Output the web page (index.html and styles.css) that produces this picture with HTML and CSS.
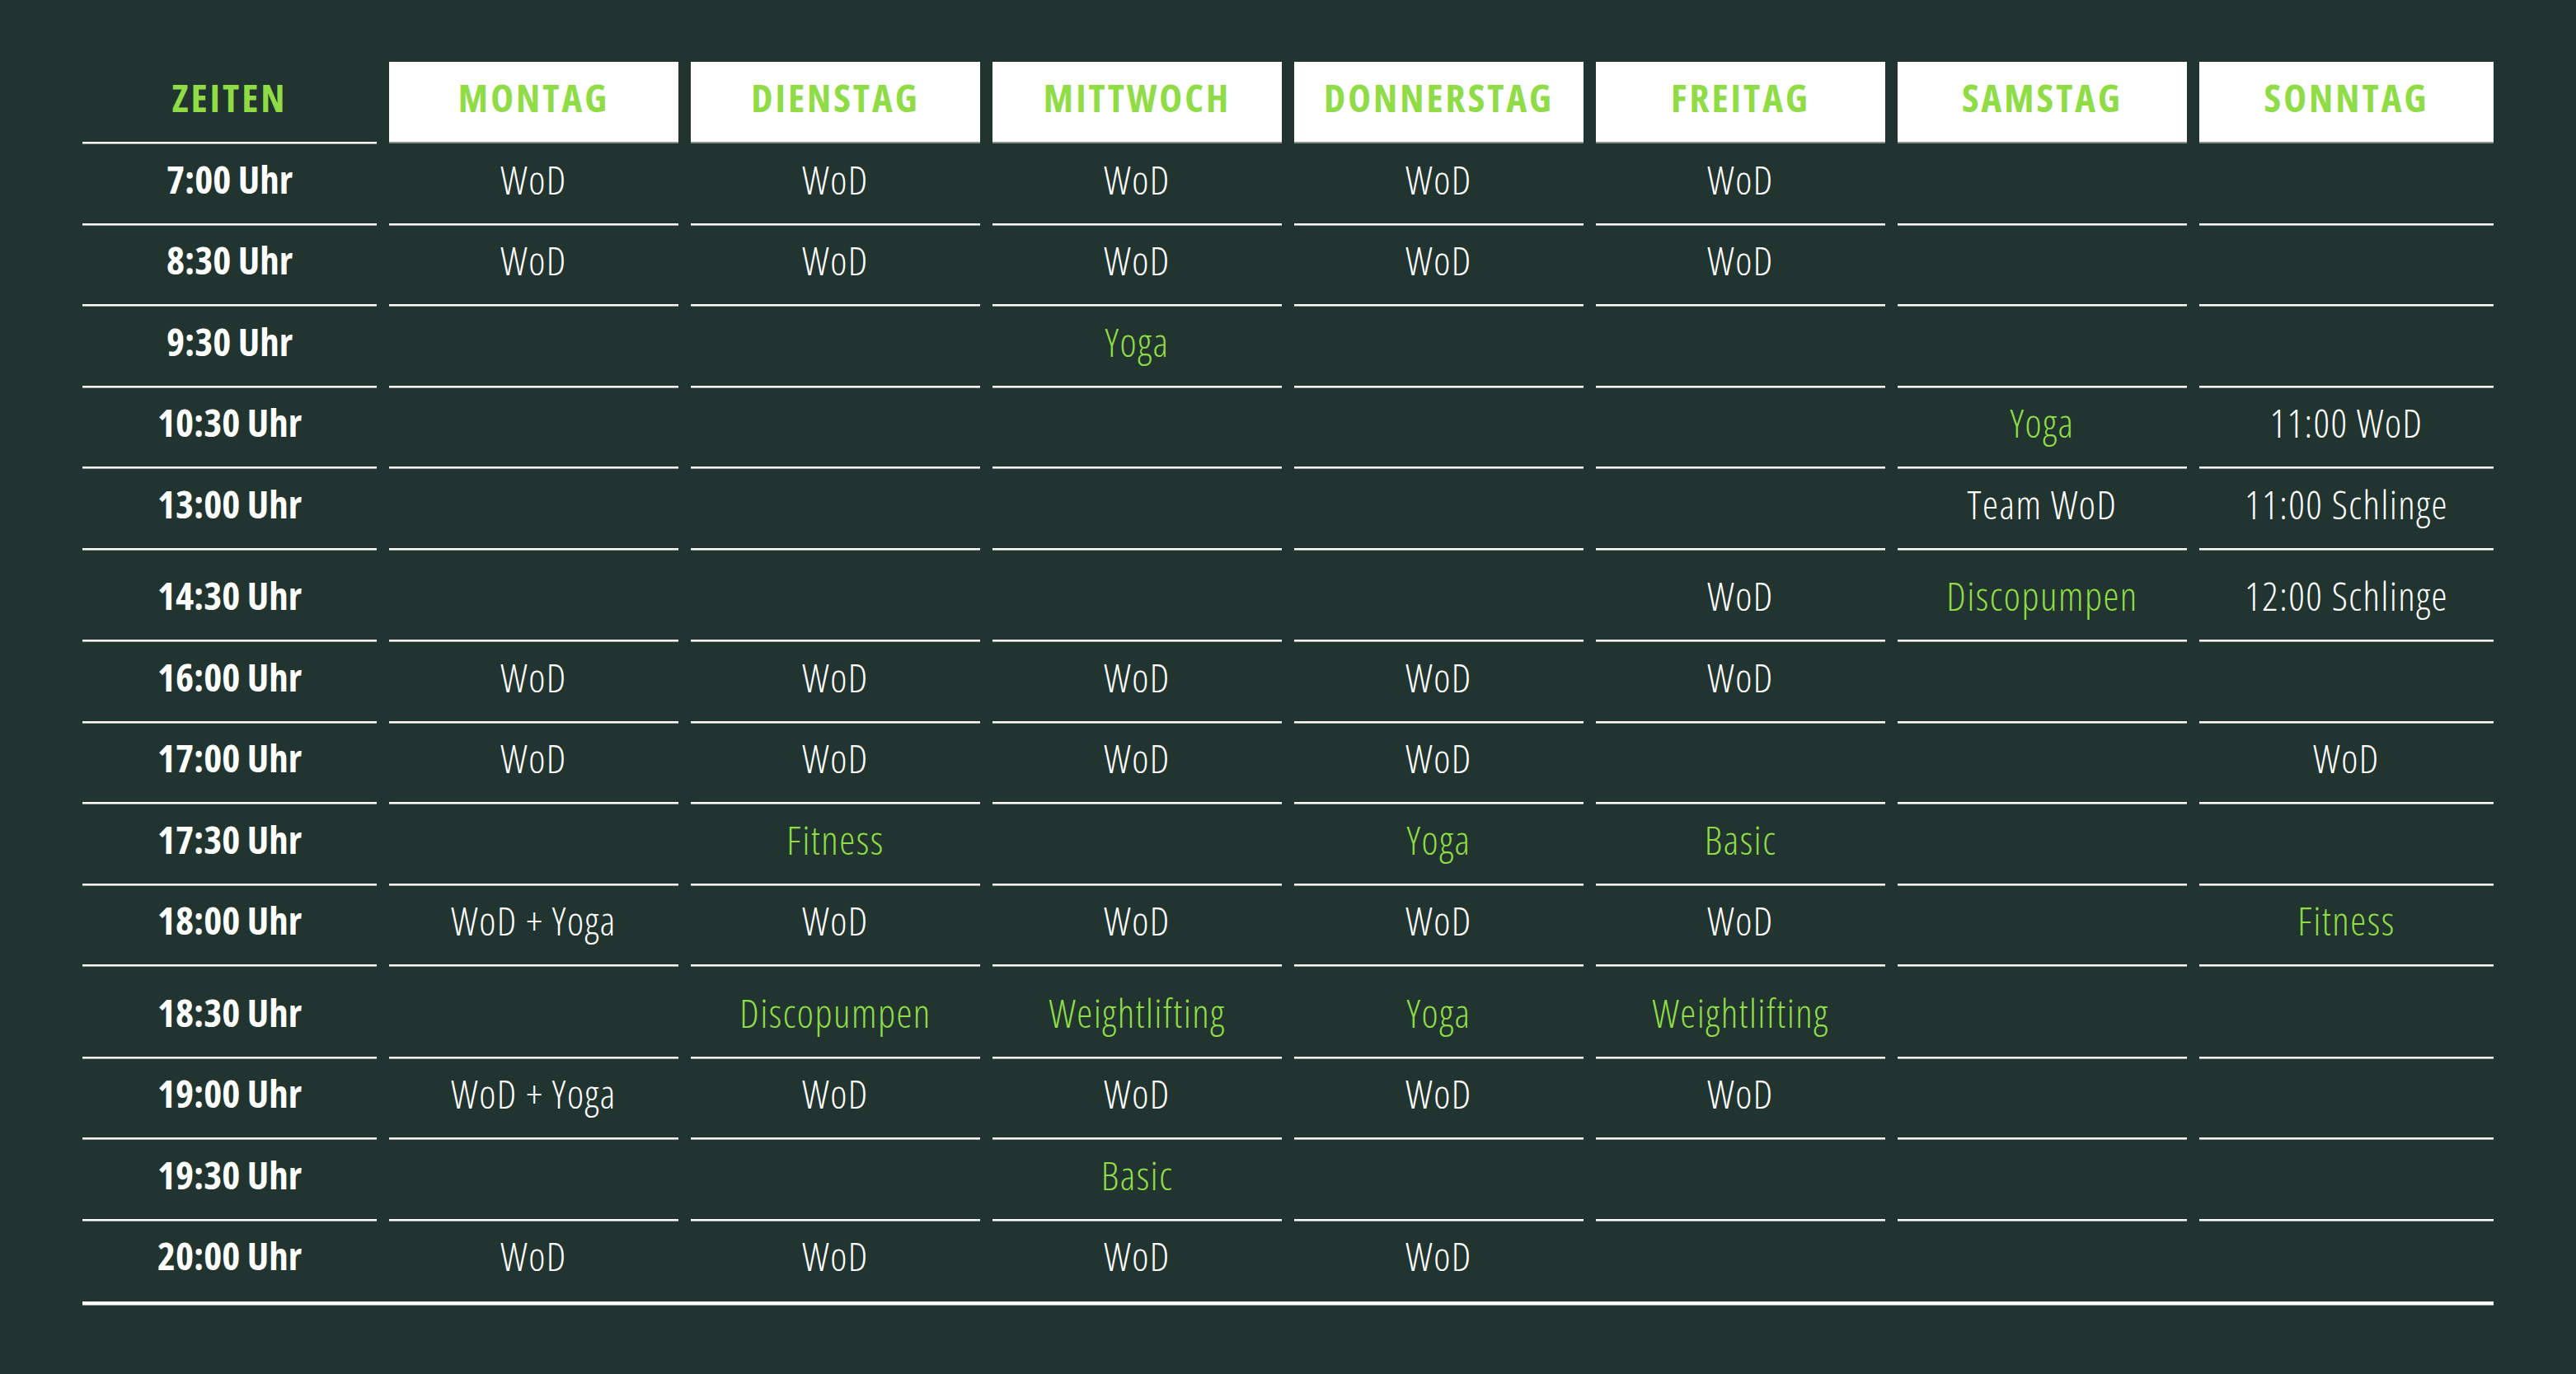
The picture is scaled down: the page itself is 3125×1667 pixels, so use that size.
FILE: index.html
```html
<!DOCTYPE html>
<html lang="de">
<head>
<meta charset="utf-8">
<title>Stundenplan</title>
<link rel="stylesheet" href="styles.css">
</head>
<body>
<div class="schedule">
  <div class="row head">
    <div class="cell time">ZEITEN</div>
    <div class="cell day">MONTAG</div>
    <div class="cell day">DIENSTAG</div>
    <div class="cell day">MITTWOCH</div>
    <div class="cell day">DONNERSTAG</div>
    <div class="cell day">FREITAG</div>
    <div class="cell day">SAMSTAG</div>
    <div class="cell day">SONNTAG</div>
  </div>
  <div class="row">
    <div class="cell time">7:00 Uhr</div>
    <div class="cell">WoD</div><div class="cell">WoD</div><div class="cell">WoD</div><div class="cell">WoD</div><div class="cell">WoD</div><div class="cell"></div><div class="cell"></div>
  </div>
  <div class="row">
    <div class="cell time">8:30 Uhr</div>
    <div class="cell">WoD</div><div class="cell">WoD</div><div class="cell">WoD</div><div class="cell">WoD</div><div class="cell">WoD</div><div class="cell"></div><div class="cell"></div>
  </div>
  <div class="row">
    <div class="cell time">9:30 Uhr</div>
    <div class="cell"></div><div class="cell"></div><div class="cell green">Yoga</div><div class="cell"></div><div class="cell"></div><div class="cell"></div><div class="cell"></div>
  </div>
  <div class="row">
    <div class="cell time">10:30 Uhr</div>
    <div class="cell"></div><div class="cell"></div><div class="cell"></div><div class="cell"></div><div class="cell"></div><div class="cell green">Yoga</div><div class="cell">11:00 WoD</div>
  </div>
  <div class="row">
    <div class="cell time">13:00 Uhr</div>
    <div class="cell"></div><div class="cell"></div><div class="cell"></div><div class="cell"></div><div class="cell"></div><div class="cell">Team WoD</div><div class="cell">11:00 Schlinge</div>
  </div>
  <div class="row tall">
    <div class="cell time">14:30 Uhr</div>
    <div class="cell"></div><div class="cell"></div><div class="cell"></div><div class="cell"></div><div class="cell">WoD</div><div class="cell green">Discopumpen</div><div class="cell">12:00 Schlinge</div>
  </div>
  <div class="row">
    <div class="cell time">16:00 Uhr</div>
    <div class="cell">WoD</div><div class="cell">WoD</div><div class="cell">WoD</div><div class="cell">WoD</div><div class="cell">WoD</div><div class="cell"></div><div class="cell"></div>
  </div>
  <div class="row">
    <div class="cell time">17:00 Uhr</div>
    <div class="cell">WoD</div><div class="cell">WoD</div><div class="cell">WoD</div><div class="cell">WoD</div><div class="cell"></div><div class="cell"></div><div class="cell">WoD</div>
  </div>
  <div class="row">
    <div class="cell time">17:30 Uhr</div>
    <div class="cell"></div><div class="cell green">Fitness</div><div class="cell"></div><div class="cell green">Yoga</div><div class="cell green">Basic</div><div class="cell"></div><div class="cell"></div>
  </div>
  <div class="row">
    <div class="cell time">18:00 Uhr</div>
    <div class="cell">WoD + Yoga</div><div class="cell">WoD</div><div class="cell">WoD</div><div class="cell">WoD</div><div class="cell">WoD</div><div class="cell"></div><div class="cell green">Fitness</div>
  </div>
  <div class="row tall">
    <div class="cell time">18:30 Uhr</div>
    <div class="cell"></div><div class="cell green">Discopumpen</div><div class="cell green">Weightlifting</div><div class="cell green">Yoga</div><div class="cell green">Weightlifting</div><div class="cell"></div><div class="cell"></div>
  </div>
  <div class="row">
    <div class="cell time">19:00 Uhr</div>
    <div class="cell">WoD + Yoga</div><div class="cell">WoD</div><div class="cell">WoD</div><div class="cell">WoD</div><div class="cell">WoD</div><div class="cell"></div><div class="cell"></div>
  </div>
  <div class="row">
    <div class="cell time">19:30 Uhr</div>
    <div class="cell"></div><div class="cell"></div><div class="cell green">Basic</div><div class="cell"></div><div class="cell"></div><div class="cell"></div><div class="cell"></div>
  </div>
  <div class="row last">
    <div class="cell time">20:00 Uhr</div>
    <div class="cell">WoD</div><div class="cell">WoD</div><div class="cell">WoD</div><div class="cell">WoD</div><div class="cell"></div><div class="cell"></div><div class="cell"></div>
  </div>
</div>
</body>
</html>
```

FILE: styles.css
```css
html, body {
  margin: 0;
  padding: 0;
  background: #21342f;
}
body {
  width: 3125px;
  height: 1667px;
  font-family: "Open Sans", "DejaVu Sans", sans-serif;
  font-stretch: 75%;
  color: #ffffff;
}
.schedule {
  position: relative;
  margin: 75px 0 0 100px;
  width: 2925px;
  border-bottom: 4px solid #ffffff;
  box-shadow: 0 1px 0 #9aa19e;
}
.row {
  display: grid;
  grid-template-columns: 357px repeat(6, 351px) 357px;
  column-gap: 15px;
  height: 98.5px;
}
.row.head {
  height: 99px;
}
.row.tall {
  height: 111.5px;
}
.cell {
  box-sizing: border-box;
  display: flex;
  align-items: flex-end;
  justify-content: center;
  padding-bottom: 30px;
  border-bottom: 2px solid #ffffff;
  box-shadow: 0 1px 0 #9aa19e;
  font-size: 48px;
  line-height: 47px;
  font-weight: 300;
  letter-spacing: 1.5px;
  white-space: nowrap;
}
.row.last .cell {
  border-bottom: 0;
  box-shadow: none;
  padding-bottom: 32px;
}
.cell.time {
  font-weight: 700;
  font-size: 47px;
  letter-spacing: 0;
}
.cell.green {
  color: #8fdc47;
}
.row.head .cell {
  color: #8fdc47;
  font-weight: 700;
  font-size: 47px;
  letter-spacing: 3px;
  padding-bottom: 30px;
}
.row.head .cell.day {
  background: #ffffff;
  border-bottom: 2px solid #8a918e;
  box-shadow: none;
}
```
